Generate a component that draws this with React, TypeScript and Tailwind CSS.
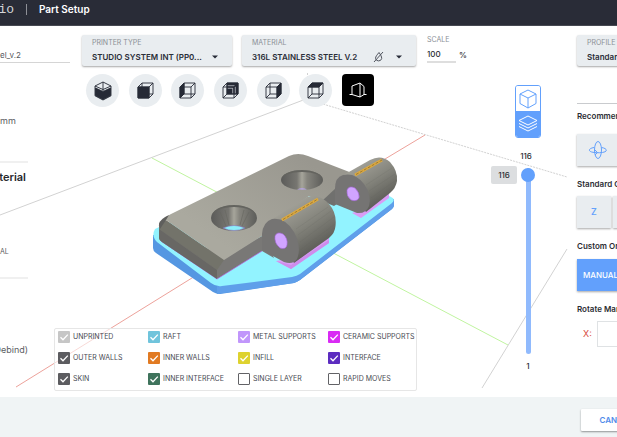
import clsx from "clsx";
import { useState } from "react";
import type { ReactNode } from "react";

const VIEWS = ["isometric", "front", "left", "back", "right", "top"] as const;
type View = (typeof VIEWS)[number];

const FACES: Record<Exclude<View, "isometric">, string> = {
  front: "M1 5H12V16H1Z",
  left: "M1 5L5 1V12L1 16Z",
  back: "M5 1H16V12H5Z",
  right: "M12 5L16 1V12L12 16Z",
  top: "M1 5L5 1H16L12 5Z",
};

const LAYERS = [
  { name: "Unprinted", color: "bg-[#c6c6c6]", on: true },
  { name: "Raft", color: "bg-[#70c4dc]", on: true },
  { name: "Metal supports", color: "bg-[#c196fb]", on: true },
  { name: "Ceramic supports", color: "bg-[#d92bf4]", on: true },
  { name: "Outer walls", color: "bg-[#5c5c60]", on: true },
  { name: "Inner walls", color: "bg-[#e17a22]", on: true },
  { name: "Infill", color: "bg-[#ded22f]", on: true },
  { name: "Interface", color: "bg-[#5c2cc0]", on: true },
  { name: "Skin", color: "bg-[#5c5c60]", on: true },
  { name: "Inner interface", color: "bg-[#3f735c]", on: true },
  { name: "Single layer", color: "bg-[#5c5c60]", on: false },
  { name: "Rapid moves", color: "bg-[#5c5c60]", on: false },
];

function ViewIcon({ view }: { view: View }) {
  if (view === "isometric") {
    return (
      <svg width="18" height="20" viewBox="0 0 18 20" fill="none" stroke="#262a36" strokeWidth="0.9" strokeLinejoin="round" aria-hidden="true">
        <path d="M1.500 7L9 10.500L16.500 7V14.500L9 18.500L1.500 14.500Z" fill="#262a36" />
        <path d="M1 5L9 1L17 5V14.800L9 19L1 14.800ZM1 5L9 8.500L17 5M9 1V10" />
      </svg>
    );
  }
  return (
    <svg width="17" height="17" viewBox="0 0 17 17" fill="none" stroke="#262a36" strokeWidth="0.9" strokeLinejoin="round" aria-hidden="true">
      <path d={FACES[view]} fill="#262a36" />
      {/* the front frame needs a light edge where it crosses the filled back face */}
      {view === "back" && <path d="M5.500 6.200H10.800V11.500M13.200 4.800V11.500M5.500 3.800H12.500" stroke="#e9edf0" strokeWidth="0.7" />}
      <path d="M1 5H12V16H1ZM5 1H16V12H5ZM1 5L5 1M12 5L16 1M1 16L5 12M12 16L16 12" />
    </svg>
  );
}

function SelectCard({ id, label, value, children }: { id: string; label: string; value: string; children?: ReactNode }) {
  return (
    <div className="flex h-[31px] flex-col justify-between rounded-[2px] bg-[#e9edf0] px-[10px] py-[3px] shadow-[0_1px_2px_rgba(0,0,0,0.35)]">
      <label htmlFor={id} className="text-[7px] leading-[9px] whitespace-nowrap text-[#8b9096] uppercase">
        {label}
      </label>
      <div className="flex h-3 items-center">
        <select id={id} className="min-w-0 flex-1 appearance-none text-[8px] leading-3 font-semibold text-[#2a2e38] outline-none">
          <option>{value}</option>
        </select>
        {children}
        <svg className="mr-1 shrink-0" width="6" height="4" viewBox="0 0 6 4" aria-hidden="true">
          <path d="M0 0.500H6L3 3.500Z" fill="#262a36" />
        </svg>
      </div>
    </div>
  );
}

function BuildScene() {
  return (
    <svg className="absolute top-0 left-0" width="617" height="371" viewBox="0 26 617 371" fill="none" aria-hidden="true">
      <defs>
        <linearGradient id="topFace" x1="230" y1="250" x2="300" y2="155" gradientUnits="userSpaceOnUse">
          <stop stopColor="#aaa99f" />
          <stop offset="1" stopColor="#99978f" />
        </linearGradient>
        <linearGradient id="barrelA" x1="288" y1="208" x2="315" y2="252" gradientUnits="userSpaceOnUse">
          <stop stopColor="#a09f96" />
          <stop offset="0.45" stopColor="#84847c" />
          <stop offset="1" stopColor="#5b5b56" />
        </linearGradient>
        <linearGradient id="barrelB" x1="358" y1="166" x2="381" y2="204" gradientUnits="userSpaceOnUse">
          <stop stopColor="#a09f96" />
          <stop offset="0.45" stopColor="#84847c" />
          <stop offset="1" stopColor="#5b5b56" />
        </linearGradient>
        <linearGradient id="sink" x1="0" x2="1" y1="0" y2="0">
          <stop stopColor="#5b5b59" />
          <stop offset="0.38" stopColor="#777671" />
          <stop offset="0.5" stopColor="#a6a59b" />
          <stop offset="0.62" stopColor="#85847d" />
          <stop offset="1" stopColor="#5d5d5a" />
        </linearGradient>
      </defs>

      {/* build volume */}
      <g stroke="#d2d2d2">
        <path d="M0 215L306 99" />
        <path d="M307.500 73V99M306 99L567 177" strokeDasharray="2 1" />
        <path d="M567 249L482 388" />
      </g>
      <path d="M152 158L230 199M320 246L508 345" stroke="#c0f4a0" />
      <path d="M16 387L200 273M380 162L425 135" stroke="#eda29b" />

      {/* raft */}
      <path d="M153 235V248Q153 251 156 253L213 292Q216 294 220 294L294 283Q297 282 300 280L392 209Q394 207 394 205V199L300 230Z" fill="#5597e2" />
      <path d="M217 286V294L294 283Q297 282 300 280L392 209Q394 207 394 205V199L297 275Z" fill="#5f9fea" />
      <path d="M155 229Q151 236 157 242L211 283Q216 287 222 286L292 277Q297 276 300 274L392 203Q396 199 391 197L370 185L170 222Z" fill="#92f3ff" />

      {/* plate */}
      <path d="M159 226V238Q159 240 162 242L217 279L262 251L274 258L264 235L224 256Z" fill="#797876" />
      <path d="M161 241L217 279L262 251" stroke="#b85fe0" strokeWidth="0.7" />
      <path d="M159 226Q158 222 166 220L224 260L217 270L159 229Z" fill="#73736a" />
      <path d="M159 229L217 270V279L162 242Q159 240 159 238Z" fill="#686764" />
      <path d="M160 224Q161 219 171 214L289 156Q298 152 308 156L352 173L337 195L323 202L309 196L268 226L262 236L224 260L166 220Z" fill="url(#topFace)" />
      <path d="M159 224Q160 219 169 215L166 220L160 229Z" fill="#5f5f5d" />
      <path d="M322 201L337 187L350 195L334 206Z" fill="#70706e" />

      {/* countersunk holes */}
      <ellipse cx="234" cy="218" rx="23" ry="13" fill="url(#sink)" />
      <path d="M211 218A23 13 0 0 1 257 218A23 11 0 0 0 211 218" fill="#64645f" />
      <path d="M223 228Q234 223 245 228Q234 233 223 228Z" fill="#8deefa" stroke="#8463b8" strokeWidth="0.5" />
      <path d="M220 212L226 226M225 210L229 225M240 225L244 210M242 226L249 212" stroke="#666660" strokeWidth="0.6" />
      <ellipse cx="302" cy="180" rx="21" ry="10" fill="url(#sink)" />
      <path d="M281 180A21 10 0 0 1 323 180A21 8 0 0 0 281 180" fill="#64645f" />
      <path d="M297 189.500Q302 187 307 189.500Z" fill="#b9a5ef" />

      {/* support pads */}
      <path d="M276 261L291 269L329 243V233L292 258Z" fill="#d99cf5" />
      <path d="M276 261L291 269L329 243V240L291 265Z" fill="#ce8cec" />
      <path d="M352 213L361 218L389 198V190L370 207Z" fill="#d99cf5" />

      {/* hinge barrels */}
      <path d="M268 222L307 197Q319 193 329 204Q337 213 335.500 226Q335 233 329 238L294 263Z" fill="url(#barrelA)" />
      <path d="M262 234Q263 222 272 219Q285 217 294 232Q302 247 297 259Q293 265 284 262L262 250Z" fill="#757473" />
      <path d="M340 177L370 160Q381 154 390 162Q398 171 397 181Q396 188 390 193L366 212Z" fill="url(#barrelB)" />
      <path d="M335 189Q335 177 343 175Q355 172 364 184Q372 195 369 206Q366 214 357 213L335 204Z" fill="#757473" />
      <g stroke="#666660" strokeWidth="0.5" opacity="0.35">
        <path d="M296 229L328 207M298 235L331 211M300 242L334 217M300 250L335 224" />
        <path d="M366 185L392 168M369 191L395 174M371 198L396 180" />
      </g>
      <path d="M275 236Q277 231 283 234Q288 238 287 245Q286 250 280 248Q274 243 275 236Z" fill="#d1a4ff" stroke="#a564d8" strokeWidth="0.6" />
      <path d="M347 190Q349 185 355 188Q360 193 359 198Q357 202 351 200Q346 196 347 190Z" fill="#d1a4ff" stroke="#a564d8" strokeWidth="0.6" />
      <g stroke="#dfaa3c" strokeWidth="3">
        <path d="M282 220L318 199M355 175L382 160" />
        <path d="M283 219.500L318 199M356 174.500L382 160" stroke="#7b643a" strokeWidth="0.7" strokeDasharray="3 1.500" />
      </g>
    </svg>
  );
}

function Legend() {
  return (
    <fieldset className="grid w-[363px] grid-cols-[90px_90px_90px_auto] gap-y-[9px] rounded-[2px] border border-[#e6e6e6] bg-white/60 pt-[2px] pb-[5px] pl-[3px]">
      {LAYERS.map((layer) => (
        <label key={layer.name} className="flex h-3 items-center gap-[3px] text-[7px] leading-3 whitespace-nowrap text-[#484a52] uppercase">
          <span className="relative h-3 w-3 shrink-0">
            <input
              type="checkbox"
              defaultChecked={layer.on}
              className={clsx(
                "peer block h-3 w-3 appearance-none rounded-[1px]",
                layer.on ? layer.color : "border border-[#626266] bg-white",
              )}
            />
            <svg className="pointer-events-none absolute inset-0 hidden peer-checked:block" width="12" height="12" viewBox="0 0 12 12" aria-hidden="true">
              <path d="M2.500 6.200L5 8.700L9.800 3.600" fill="none" stroke="#fff" strokeWidth="1.300" />
            </svg>
          </span>
          {layer.name}
        </label>
      ))}
    </fieldset>
  );
}

function LayerSlider() {
  const [layer, setLayer] = useState(116);
  return (
    <div className="flex w-[76px] flex-col items-center text-[8px] leading-3 font-medium text-[#2b2d33]">
      <div className="flex w-[26px] flex-col overflow-hidden rounded-[3px] border border-[#62a0fc]">
        <button type="button" aria-label="Model view" className="flex h-[25px] items-center justify-center bg-white">
          <svg width="18" height="20" viewBox="0 0 18 20" fill="none" stroke="#62a0fc" strokeLinejoin="round" aria-hidden="true">
            <path d="M9 1L17 5V14.500L9 19L1 14.500V5ZM1 5L9 9L17 5M9 9V19" />
          </svg>
        </button>
        <button type="button" aria-label="Layer view" className="flex h-[26px] items-center justify-center bg-[#62a0fc]">
          <svg width="20" height="18" viewBox="0 0 20 18" fill="none" stroke="#fff" strokeLinejoin="round" aria-hidden="true">
            <path d="M10 1L19 5.500L10 10L1 5.500ZM1 8.500L10 13L19 8.500M1 11.500L10 16L19 11.500" />
          </svg>
        </button>
      </div>
      <label htmlFor="layer" className="mt-3 pr-1">
        116
      </label>
      <div className="relative mt-[6px] flex justify-center">
        <output htmlFor="layer" className="absolute top-[-2px] right-[18px] w-[26px] rounded-[2px] bg-[#dcdee0] text-center leading-[18px]">
          {layer}
        </output>
        <input
          id="layer"
          type="range"
          min={1}
          max={116}
          value={layer}
          onChange={(e) => setLayer(Number(e.target.value))}
          className="h-[186px] w-[14px] appearance-none bg-transparent [direction:rtl] [writing-mode:vertical-lr] [&::-webkit-slider-runnable-track]:w-[5px] [&::-webkit-slider-runnable-track]:rounded-full [&::-webkit-slider-runnable-track]:bg-[#90bafd] [&::-webkit-slider-thumb]:ml-[-5px] [&::-webkit-slider-thumb]:h-[14px] [&::-webkit-slider-thumb]:w-[14px] [&::-webkit-slider-thumb]:appearance-none [&::-webkit-slider-thumb]:rounded-full [&::-webkit-slider-thumb]:bg-[#62a0fc]"
        />
      </div>
      <span className="mt-[6px]">1</span>
    </div>
  );
}

function PartPanel() {
  return (
    <aside className="w-[72px] shrink-0 overflow-hidden text-[9px] leading-[14px] text-[#5b5d62]">
      <input
        aria-label="Part name"
        defaultValue="el_v.2"
        className="mt-[21px] block h-4 w-[70px] border-b border-[#d5d5d5] text-[8px] text-[#55575d] outline-none"
      />
      <div className="flex w-7 flex-col items-end whitespace-nowrap">
        <p className="mt-[51px] w-7">mm</p>
        <hr className="mt-[33px] w-7 border-t-2 border-[#f0f0f0]" />
        <h2 className="mt-[6px] pr-[2px] text-[11px] leading-4 font-semibold text-[#26282d]">aterial</h2>
        <p className="mt-[60px] w-7 text-[7px]">AL</p>
        <hr className="mt-[18px] w-7 border-t-2 border-[#f0f0f0]" />
        <p className="mt-[64px]">Debind)</p>
      </div>
    </aside>
  );
}

function OrientationPanel() {
  const heading = "text-[8px] leading-3 font-semibold text-[#2b2d33]";
  const tile = "flex h-8 shrink-0 items-center justify-center bg-[#e9edf0] text-[9px] font-medium text-[#62a0fc] shadow-[0_1px_2px_rgba(0,0,0,0.35)]";
  return (
    <aside className="w-[43px] shrink-0 overflow-hidden whitespace-nowrap">
      <div className="flex w-[150px] flex-col pt-[9px] pl-[3px]">
        <SelectCard id="profile" label="Profile" value="Standard" />
        <hr className="mt-[37px] border-[#c9cbce]" />
        <h3 className={clsx(heading, "mt-[6px]")}>Recommended</h3>
        <button type="button" aria-label="Auto orient" className={clsx(tile, "mt-3 w-[42px]")}>
          <svg width="20" height="20" viewBox="0 0 20 20" fill="none" stroke="#62a0fc" aria-hidden="true">
            <ellipse cx="10" cy="10" rx="3.500" ry="8.500" />
            <path d="M6 7.500C0 8.500 0 11.500 5 12.300C9 13 14 13 17 11.800C19.500 10.500 18.500 8.300 13.500 7.500" />
            <path d="M7 10L9.500 12.500L7 15" />
          </svg>
        </button>
        <h3 className={clsx(heading, "mt-3")}>Standard Orientations</h3>
        <div className="mt-[6px] flex gap-[2px]">
          <button type="button" className={clsx(tile, "w-[34px]")}>Z</button>
          <button type="button" aria-label="Flip" className={clsx(tile, "w-[34px]")} />
        </div>
        <h3 className={clsx(heading, "mt-3")}>Custom Orientation</h3>
        <button type="button" className="mt-[7px] h-8 bg-[#62a0fc] px-[6px] text-left text-[8px] font-medium text-white shadow-[0_1px_2px_rgba(0,0,0,0.35)]">
          MANUALLY
        </button>
        <h3 className={clsx(heading, "mt-3")}>Rotate Manually</h3>
        <div className="mt-[6px] flex h-[26px] items-center gap-[5px] pl-[6px]">
          <label htmlFor="rotate-x" className="text-[9px] text-[#d84a3a]">X:</label>
          <input id="rotate-x" className="h-[26px] w-[60px] border border-[#dfe2e4] bg-white" />
        </div>
      </div>
    </aside>
  );
}

export default function App() {
  const [view, setView] = useState<View | null>(null);

  return (
    <div className="flex min-h-screen flex-col bg-white font-['Inter',sans-serif]">
      <header className="flex h-[26px] items-start overflow-hidden border-b border-[#464952] bg-[#292c37] pt-[2px] text-white">
        <div className="flex w-[14px] justify-end font-['Liberation_Mono',monospace] text-[13px] leading-4 text-[#d4d5d8]">
          io
        </div>
        <span className="mt-[2px] ml-3 h-[11px] w-px bg-[#8e9097]" />
        <h1 className="ml-3 text-[10px] leading-[14px] font-semibold">Part Setup</h1>
      </header>

      <main className="relative flex flex-1">
        <BuildScene />
        <PartPanel />

        <section className="relative flex min-w-0 flex-1 flex-col pt-[9px]">
          <div className="flex pl-[10px]">
            <div className="w-[150px]">
              <SelectCard id="printer" label="Printer type" value="STUDIO SYSTEM INT (PP0..." />
            </div>
            <div className="ml-[10px] w-[174px]">
              <SelectCard id="material" label="Material" value="316L STAINLESS STEEL V.2">
                <svg className="mr-3" width="11" height="12" viewBox="0 0 11 12" fill="none" stroke="#50545e" aria-hidden="true">
                  <path d="M6 1.500C4 4 2.500 5.500 2.500 7.500A3.200 3.200 0 0 0 8.700 7.500C8.700 5.500 7.500 3.500 6 1.500ZM10 1L1 11" />
                </svg>
              </SelectCard>
            </div>
            <div className="ml-[11px] text-[#2b2d33]">
              <label htmlFor="scale" className="block text-[7px] leading-[9px] text-[#8b9096]">SCALE</label>
              <div className="flex gap-[3px] text-[8px] leading-4 font-medium">
                <input id="scale" defaultValue="100" className="mt-[3px] h-4 w-[29px] border-b-2 border-[#dedede] outline-none" />
                <span className="pt-[3px]">%</span>
              </div>
            </div>
          </div>

          <div className="mt-[8px] ml-[14px] flex w-72 justify-between">
            {VIEWS.map((v) => (
              <button
                key={v}
                type="button"
                aria-label={`${v} view`}
                aria-pressed={v === view}
                onClick={() => setView(v)}
                className="flex h-[33px] w-[33px] items-center justify-center rounded-full bg-[#e9edf0]"
              >
                <ViewIcon view={v} />
              </button>
            ))}
            <button type="button" aria-label="Perspective" className="flex h-8 w-8 items-center justify-center rounded-[4px] bg-black">
              <svg width="18" height="16" viewBox="0 0 18 16" fill="none" stroke="#fff" strokeLinejoin="round" aria-hidden="true">
                <path d="M0.500 12.500H3V4L11 1V15L3 12.500M11 1L15 4.500V12.500L11 15M15 12.500H17.500" />
              </svg>
            </button>
          </div>

          <div className="mt-auto mb-[6px] ml-[-18px]">
            <Legend />
          </div>
          <div className="absolute top-[59px] right-2">
            <LayerSlider />
          </div>
        </section>

        <OrientationPanel />
      </main>

      <footer className="flex h-10 items-start justify-end overflow-hidden bg-[#f0f4f5] pt-2">
        <div className="w-9 shrink-0">
          <button type="button" className="h-[22px] w-[70px] rounded-[1px] bg-white text-[8px] font-semibold text-[#4f8bea] shadow-[0_1px_2px_rgba(0,0,0,0.4)]">
            CANCEL
          </button>
        </div>
      </footer>
    </div>
  );
}
